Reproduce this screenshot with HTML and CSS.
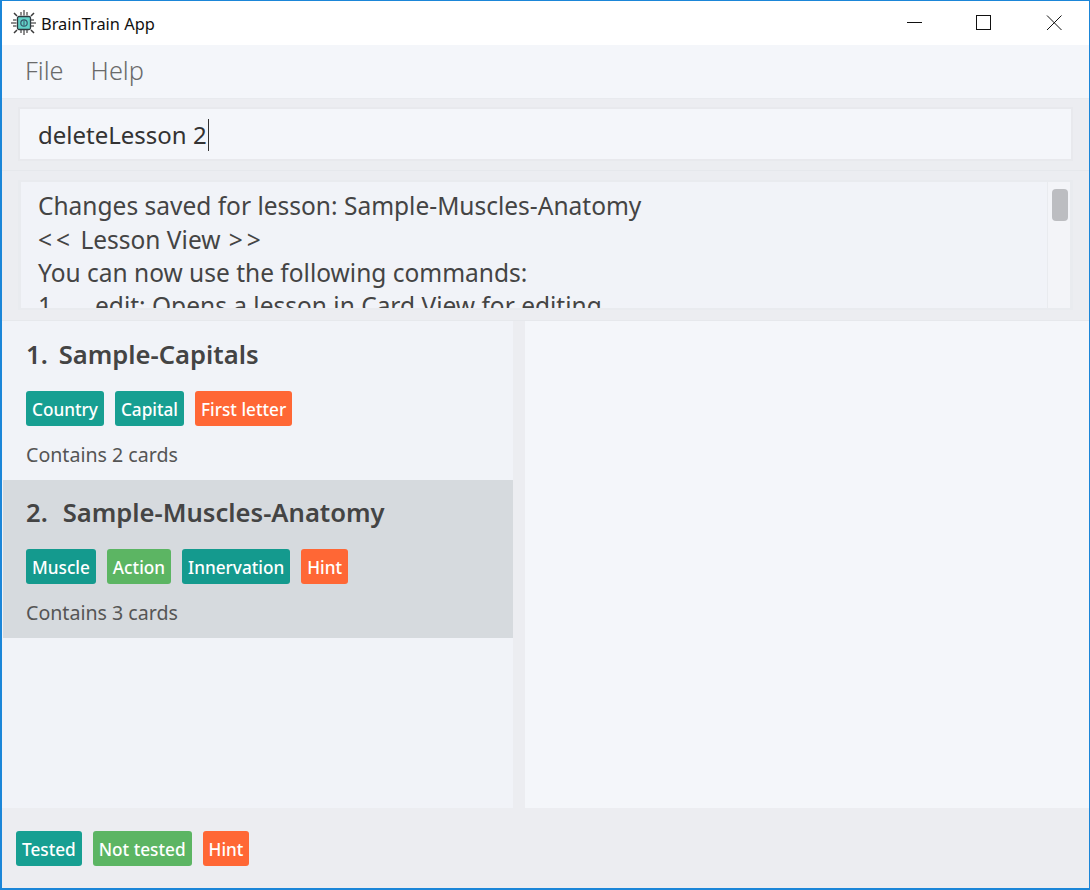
FILE: index.html
```html
<!DOCTYPE html>
<html lang="en">
<head>
<meta charset="utf-8">
<title>BrainTrain App</title>
<link rel="stylesheet" href="styles.css">
</head>
<body>
<div class="window">
  <header class="titlebar">
    <svg class="logo" viewBox="0 0 26 26" width="26" height="26" aria-hidden="true">
      <g stroke="#6a6a6a" stroke-width="1.500" fill="none">
        <path d="M10 5.500V2M13 5.500V0M16 5.500V2M10 20v3M13 20v5M16 20v3M5.500 10H2M5.500 13H0M5.500 16H2M20 10h3M20 13h5M20 16h3"/>
        <path d="M6 6 3 3M20 6l3-3M6 20l-3 3M20 20l3 3" stroke="#3a3a3a"/>
      </g>
      <rect x="6.500" y="6.500" width="13" height="13" rx="1.500" fill="#62d2c8" stroke="#2f3a40" stroke-width="1.300"/>
      <circle cx="13" cy="13" r="3.200" fill="none" stroke="#35566a" stroke-width="1.200"/>
      <path d="M13 10.500v5" stroke="#35566a" stroke-width="1"/>
    </svg>
    <span class="app-name">BrainTrain App</span>
    <div class="win-controls">
      <svg class="win-btn" viewBox="0 0 16 16" width="16" height="16" aria-hidden="true"><path d="M1 7.500H16" stroke="#111" fill="none"/></svg>
      <svg class="win-btn" viewBox="0 0 16 16" width="16" height="16" aria-hidden="true"><rect x="0.500" y="0.500" width="14" height="14" stroke="#111" fill="none"/></svg>
      <svg class="win-btn" viewBox="0 0 16 16" width="16" height="16" aria-hidden="true"><path d="M1 0.500 15.500 15M15.500 0.500 1 15" stroke="#111" fill="none"/></svg>
    </div>
  </header>

  <nav class="menubar">
    <span class="menu-item">File</span>
    <span class="menu-item">Help</span>
  </nav>

  <section class="command-section">
    <div class="command-box"><span>deleteLesson 2</span><span class="caret"></span></div>
  </section>

  <section class="result-section">
    <div class="result-box">
      <div class="result-text">
        <div>Changes saved for lesson: Sample-Muscles-Anatomy</div>
        <div><span class="chevrons">&lt;&lt;</span> Lesson View <span class="chevrons chevrons-end">&gt;&gt;</span></div>
        <div>You can now use the following commands:</div>
        <div class="cmd-row"><span class="cmd-num">1.</span><span>edit: Opens a lesson in Card View for editing</span></div>
      </div>
      <div class="scrollbar"><div class="scroll-thumb"></div></div>
    </div>
  </section>

  <main class="split">
    <div class="lesson-list">
      <article class="lesson">
        <h2 class="lesson-title"><span>1.</span><span>Sample-Capitals</span></h2>
        <div class="tags">
          <span class="tag teal">Country</span>
          <span class="tag teal">Capital</span>
          <span class="tag orange">First letter</span>
        </div>
        <p class="lesson-count">Contains 2 cards</p>
      </article>
      <article class="lesson selected">
        <h2 class="lesson-title"><span>2.</span><span>Sample-Muscles-Anatomy</span></h2>
        <div class="tags">
          <span class="tag teal">Muscle</span>
          <span class="tag green">Action</span>
          <span class="tag teal">Innervation</span>
          <span class="tag orange">Hint</span>
        </div>
        <p class="lesson-count">Contains 3 cards</p>
      </article>
    </div>
    <div class="splitter"></div>
    <div class="detail"></div>
  </main>

  <footer class="legend">
    <span class="tag teal">Tested</span>
    <span class="tag green">Not tested</span>
    <span class="tag orange">Hint</span>
  </footer>
</div>
</body>
</html>
```
FILE: styles.css
```css
* { box-sizing: border-box; }

html, body {
  margin: 0;
  height: 100%;
  overflow: hidden;
}

body {
  font-family: "Noto Sans", "Open Sans", sans-serif;
  color: #333;
}

.window {
  width: 1090px;
  height: 890px;
  border: 1px solid #1b86d8;
  border-left-width: 2px;
  border-bottom-width: 2px;
  display: flex;
  flex-direction: column;
  background: #f4f6fa;
}

.titlebar {
  height: 44px;
  flex: none;
  background: #fff;
  display: flex;
  align-items: center;
  padding-left: 9px;
}

.logo { flex: none; }

.app-name {
  margin-left: 4px;
  font-size: 16.400px;
  color: #111;
}

.win-controls {
  margin-left: auto;
  display: flex;
  gap: 54px;
  padding-right: 27px;
}

.menubar {
  height: 54px;
  flex: none;
  display: flex;
  align-items: center;
  gap: 27px;
  padding: 0 0 4px 23px;
  border-bottom: 1px solid #e8eaee;
}

.menu-item {
  font-size: 25.300px;
  color: #6a6a6a;
  font-weight: 300;
}

.command-section {
  height: 72px;
  flex: none;
  background: #ecedf1;
  border-bottom: 1px solid #e6e8ec;
  padding: 8px 16px 0;
}

.command-box {
  height: 54px;
  background: #f4f6fa;
  border: 2px solid #e8e9ed;
  display: flex;
  align-items: center;
  padding: 1px 0 0 18px;
  font-size: 24px;
  color: #333;
}

.caret {
  width: 1.500px;
  height: 32px;
  background: #333;
  margin-left: 1px;
}

.result-section {
  height: 150px;
  flex: none;
  background: #ecedf1;
  border-bottom: 1px solid #e6e8ec;
  padding: 9px 16px 0;
}

.result-box {
  height: 130px;
  background: #f1f3f8;
  border: 2px solid #e9ebef;
  border-left-width: 3px;
  border-right-width: 3px;
  display: flex;
  overflow: hidden;
}

.result-text {
  flex: 1;
  padding: 7.400px 0 0 17px;
  font-size: 24.500px;
  line-height: 33.300px;
  color: #444;
  white-space: nowrap;
  overflow: hidden;
}

.chevrons {
  letter-spacing: 4px;
  word-spacing: 2px;
}

.chevrons-end { margin-left: 2px; }

.cmd-row {
  display: flex;
}

.cmd-num { width: 57px; }

.scrollbar {
  width: 23px;
  flex: none;
  border-left: 1px solid #e9ebef;
  padding: 7px 2px 0 4px;
  background: #f3f4f8;
}

.scroll-thumb {
  height: 32px;
  background: #bcbdc1;
  border-radius: 4px;
}

.split {
  flex: 1;
  min-height: 0;
  display: flex;
}

.lesson-list {
  width: 511px;
  flex: none;
  background: #f1f3f8;
}

.lesson {
  height: 159px;
  padding: 13px 0 0 24px;
}

.lesson.selected {
  height: 158px;
  margin-left: 1px;
  padding: 12px 0 0 23px;
  background: #d6dade;
}

.lesson-title {
  margin: 0;
  font-size: 25.600px;
  font-weight: 600;
  line-height: 42px;
  color: #444;
  display: flex;
  gap: 11px;
}

.selected .lesson-title { gap: 15px; }

.tags {
  display: flex;
  gap: 11px;
  margin-top: 15px;
}

.tag {
  display: inline-block;
  height: 35px;
  line-height: 37px;
  padding: 0 6px;
  border-radius: 3px;
  font-size: 17.200px;
  font-weight: 500;
  color: #fff;
  white-space: nowrap;
}

.teal { background: #179f92; }
.selected .teal { background: #149a8e; }
.green { background: #5cb563; }
.orange { background: #ff6735; }

.lesson-count {
  margin: 11px 0 0;
  font-size: 19.600px;
  line-height: 36px;
  color: #555;
}

.splitter {
  width: 12px;
  flex: none;
  background: #ecedf1;
}

.detail {
  flex: 1;
  background: #f4f6fa;
}

.legend {
  height: 80px;
  flex: none;
  background: #ecedf1;
  display: flex;
  align-items: flex-start;
  gap: 11px;
  padding: 23px 0 0 14px;
}
```
